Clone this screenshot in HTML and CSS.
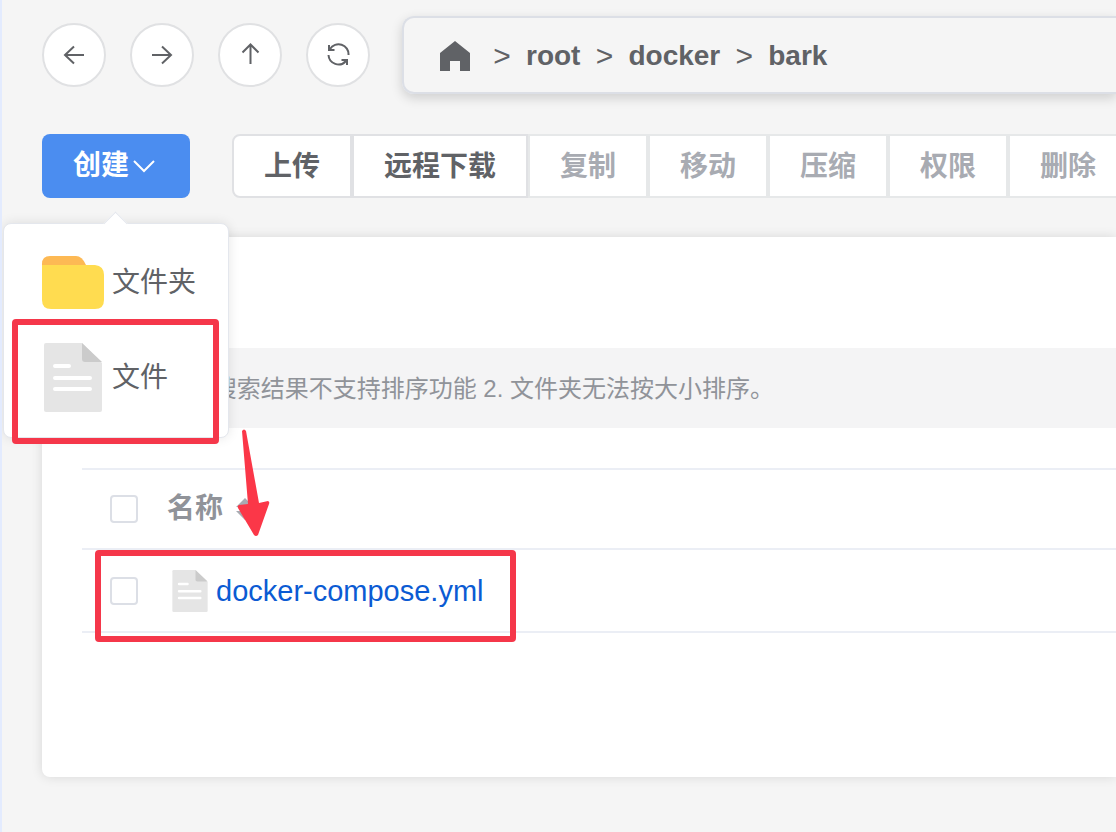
FILE: index.html
```html
<!DOCTYPE html>
<html lang="zh-CN">
<head>
<meta charset="utf-8">
<title>文件管理</title>
<link rel="stylesheet" href="styles.css">
</head>
<body>
<svg class="sprite" aria-hidden="true">
  <symbol id="file" viewBox="0 0 58 69">
    <path d="M2 0H38L58 20V67Q58 69 56 69H2Q0 69 0 67V2Q0 0 2 0Z" fill="#e5e5e5"/>
    <path d="M38 0L58 19H41Q38 19 38 16Z" fill="#cbcbcb"/>
    <path d="M11 23H25M11 35H46M11 46H46" fill="none" stroke="#fff" stroke-width="4" stroke-linecap="round"/>
  </symbol>
</svg>
<main class="page">
  <header class="nav">
    <button class="round" aria-label="后退"><svg class="glyph" viewBox="0 0 24 24"><path d="M22 12H3M12 3.5L3 12L12 20.5"/></svg></button>
    <button class="round" aria-label="前进"><svg class="glyph" viewBox="0 0 24 24"><path d="M2 12H21M12 3.5L21 12L12 20.5"/></svg></button>
    <button class="round" aria-label="上级"><svg class="glyph" viewBox="0 0 24 24"><path d="M12.500 21V2M4.500 9.500L12.500 1.500L20.500 9.500"/></svg></button>
    <button class="round" aria-label="刷新"><svg class="glyph" viewBox="0 0 24 24"><path d="M22.500 12A10 10 0 0 0 4 6M3 2V7H8.500M2.500 12A10 10 0 0 0 20 18M21 22V17H15.500"/></svg></button>
    <nav class="crumbs" aria-label="路径">
      <a class="crumb" href="#" aria-label="主目录"><svg class="home" viewBox="0 0 30 30"><path d="M15 0L30 12V30H20V20H10V30H0V12Z"/></svg></a>
      <span class="sep">&gt;</span><a class="crumb" href="#">root</a>
      <span class="sep">&gt;</span><a class="crumb" href="#">docker</a>
      <span class="sep">&gt;</span><a class="crumb" href="#">bark</a>
    </nav>
  </header>

  <div class="toolbar">
    <div class="create">
      <button class="primary">创建<svg class="chevron" viewBox="0 0 22 14"><path d="M1 2L11 12L21 2"/></svg></button>
      <div class="menu">
        <button class="menu-item">
          <svg class="menu-icon" viewBox="0 0 62 69"><path d="M0 30V16Q0 8 8 8H34Q40 8 44 17V30Z" fill="#fdb954"/><path d="M0 17H53Q62 18 62 27V52Q62 61 53 61H9Q0 61 0 52Z" fill="#ffdc50"/></svg>
          文件夹
        </button>
        <button class="menu-item">
          <svg class="menu-icon"><use href="#file"/></svg>
          文件
        </button>
      </div>
    </div>
    <div class="group">
      <button class="tool">上传</button>
      <button class="tool">远程下载</button>
      <button class="tool" disabled>复制</button>
      <button class="tool" disabled>移动</button>
      <button class="tool" disabled>压缩</button>
      <button class="tool" disabled>权限</button>
      <button class="tool" disabled>删除</button>
    </div>
  </div>

  <section class="card">
    <p class="notice">1. 搜索结果不支持排序功能 2. 文件夹无法按大小排序。</p>
    <table class="files">
      <thead>
        <tr>
          <th class="pick"><input class="check" type="checkbox" aria-label="全选"></th>
          <th><span class="cell">名称<svg class="sort" viewBox="0 0 20 26"><path d="M10 2L19 11H1ZM10 24L1 15H19Z"/></svg></span></th>
        </tr>
      </thead>
      <tbody>
        <tr>
          <td class="pick"><input class="check" type="checkbox" aria-label="选择 docker-compose.yml"></td>
          <td><span class="cell"><svg class="file-icon"><use href="#file"/></svg><a class="file-link" href="#">docker-compose.yml</a></span></td>
        </tr>
      </tbody>
    </table>
  </section>

  <div class="mark mark-menu"></div>
  <div class="mark mark-row"></div>
  <svg class="pointer" viewBox="0 0 34 110"><path d="M6 2Q8 -1 10 2L23 74L32 72Q34 73 33 75L22 106Q20 108 18 106L2 79Q1 77 3 76L12 75Z"/></svg>
</main>
</body>
</html>
```
FILE: styles.css
```css
* {
  box-sizing: border-box;
}

body {
  margin: 0;
  background: #f5f5f5;
  color: #606266;
  font-family: "Liberation Sans", "Noto Sans CJK SC", sans-serif;
  font-size: 28px;
  line-height: 40px;
}

button {
  margin: 0;
  font: inherit;
  color: inherit;
  white-space: nowrap;
}

a {
  color: inherit;
  text-decoration: none;
}

.sprite {
  position: absolute;
  width: 0;
  height: 0;
}

.page {
  position: relative;
  min-height: 100vh;
  padding: 16px 0 54px 40px;
  border-left: 2px solid #e3ebfe;
  overflow: hidden;
}

.nav {
  display: flex;
  align-items: center;
  gap: 24px;
}

.round {
  display: grid;
  place-items: center;
  width: 64px;
  height: 64px;
  padding: 0;
  border: 2px solid #e0e1e3;
  border-radius: 50%;
  background: #fff;
}

.glyph {
  width: 24px;
  height: 24px;
  fill: none;
  stroke: #606266;
  stroke-width: 2;
}

.crumbs {
  display: flex;
  flex: 1;
  align-items: center;
  height: 78px;
  margin-left: 8px;
  padding: 2px 0 0 36px;
  border: 2px solid #dcdfe6;
  border-right: 0;
  border-radius: 12px 0 0 12px;
  box-shadow: 0 4px 12px rgba(0, 0, 0, 0.16);
}

.crumb {
  font-weight: 700;
}

.sep {
  flex: none;
  width: 48px;
  font-size: 30px;
  text-align: center;
}

.home {
  display: block;
  width: 30px;
  height: 30px;
  margin-right: 8px;
  fill: #606266;
}

.toolbar {
  display: flex;
  gap: 42px;
  margin-top: 40px;
}

.create {
  position: relative;
}

.primary {
  display: flex;
  align-items: center;
  justify-content: center;
  gap: 4px;
  width: 148px;
  height: 64px;
  padding: 0 4px 0 0;
  border: 0;
  border-radius: 8px;
  background: #4b8df0;
  color: #fff;
  font-weight: 700;
}

.chevron {
  width: 22px;
  height: 14px;
  fill: none;
  stroke: #fff;
  stroke-width: 2;
}

.menu {
  position: absolute;
  z-index: 1;
  top: 89px;
  left: -39px;
  width: 226px;
  padding: 11px 0 12px;
  border: 1px solid #e4e7ed;
  border-radius: 8px;
  background: #fff;
  box-shadow: 0 0 12px rgba(0, 0, 0, 0.1);
}

.menu::before {
  content: "";
  position: absolute;
  top: -9px;
  left: 103px;
  width: 16px;
  height: 16px;
  border: 1px solid #e4e7ed;
  border-width: 1px 0 0 1px;
  background: #fff;
  transform: rotate(45deg);
}

.menu-item {
  display: flex;
  align-items: center;
  gap: 8px;
  width: 100%;
  height: 95px;
  padding: 0 0 0 38px;
  border: 0;
  background: none;
}

.menu-icon {
  width: 62px;
  height: 69px;
}

.group {
  display: flex;
  flex: none;
}

.tool {
  height: 64px;
  padding: 2px 30px 0;
  border: 2px solid #e0e1e4;
  background: #fff;
  font-weight: 700;
}

.tool:first-child {
  border-radius: 8px 0 0 8px;
}

.tool:disabled {
  border-color: #e6e8e9;
  color: #a8abb2;
}

.card {
  min-height: 540px;
  margin-top: 39px;
  padding: 111px 0 0 40px;
  border-radius: 8px 0 0 8px;
  background: #fff;
  box-shadow: 0 0 12px rgba(0, 0, 0, 0.12);
}

.notice {
  margin: 0;
  padding: 21px 0 19px 104px;
  background: #f4f4f5;
  color: #909399;
  font-size: 24px;
}

.files {
  width: 100%;
  margin-top: 40px;
  border-collapse: separate;
  border-spacing: 0;
  border-top: 2px solid #ebeef5;
}

.files th,
.files td {
  height: 80px;
  padding: 0;
  border-bottom: 2px solid #ebeef5;
  text-align: left;
}

.files td {
  height: 83px;
}

.files th {
  color: #909399;
}

.files .pick {
  width: 85px;
  padding-left: 28px;
}

.check {
  display: block;
  width: 28px;
  height: 28px;
  margin: 0;
  appearance: none;
  border: 2px solid #dcdfe6;
  border-radius: 4px;
  background: #fff;
}

.cell {
  display: flex;
  align-items: center;
}

.sort {
  width: 20px;
  height: 26px;
  margin-left: 12px;
  fill: #a8abb2;
}

.file-icon {
  width: 36px;
  height: 42px;
  margin: 0 8px 0 5px;
}

.file-link {
  color: #0b5bd3;
  font-size: 29px;
}

.mark {
  position: absolute;
  z-index: 2;
  border: 6px solid #f5374a;
  border-radius: 4px;
  pointer-events: none;
}

.mark-menu {
  top: 319px;
  left: 10px;
  width: 207px;
  height: 125px;
}

.mark-row {
  top: 550px;
  left: 93px;
  width: 421px;
  height: 92px;
}

.pointer {
  position: absolute;
  z-index: 2;
  top: 429px;
  left: 234px;
  width: 34px;
  height: 110px;
  fill: #fb3748;
  pointer-events: none;
}
```
